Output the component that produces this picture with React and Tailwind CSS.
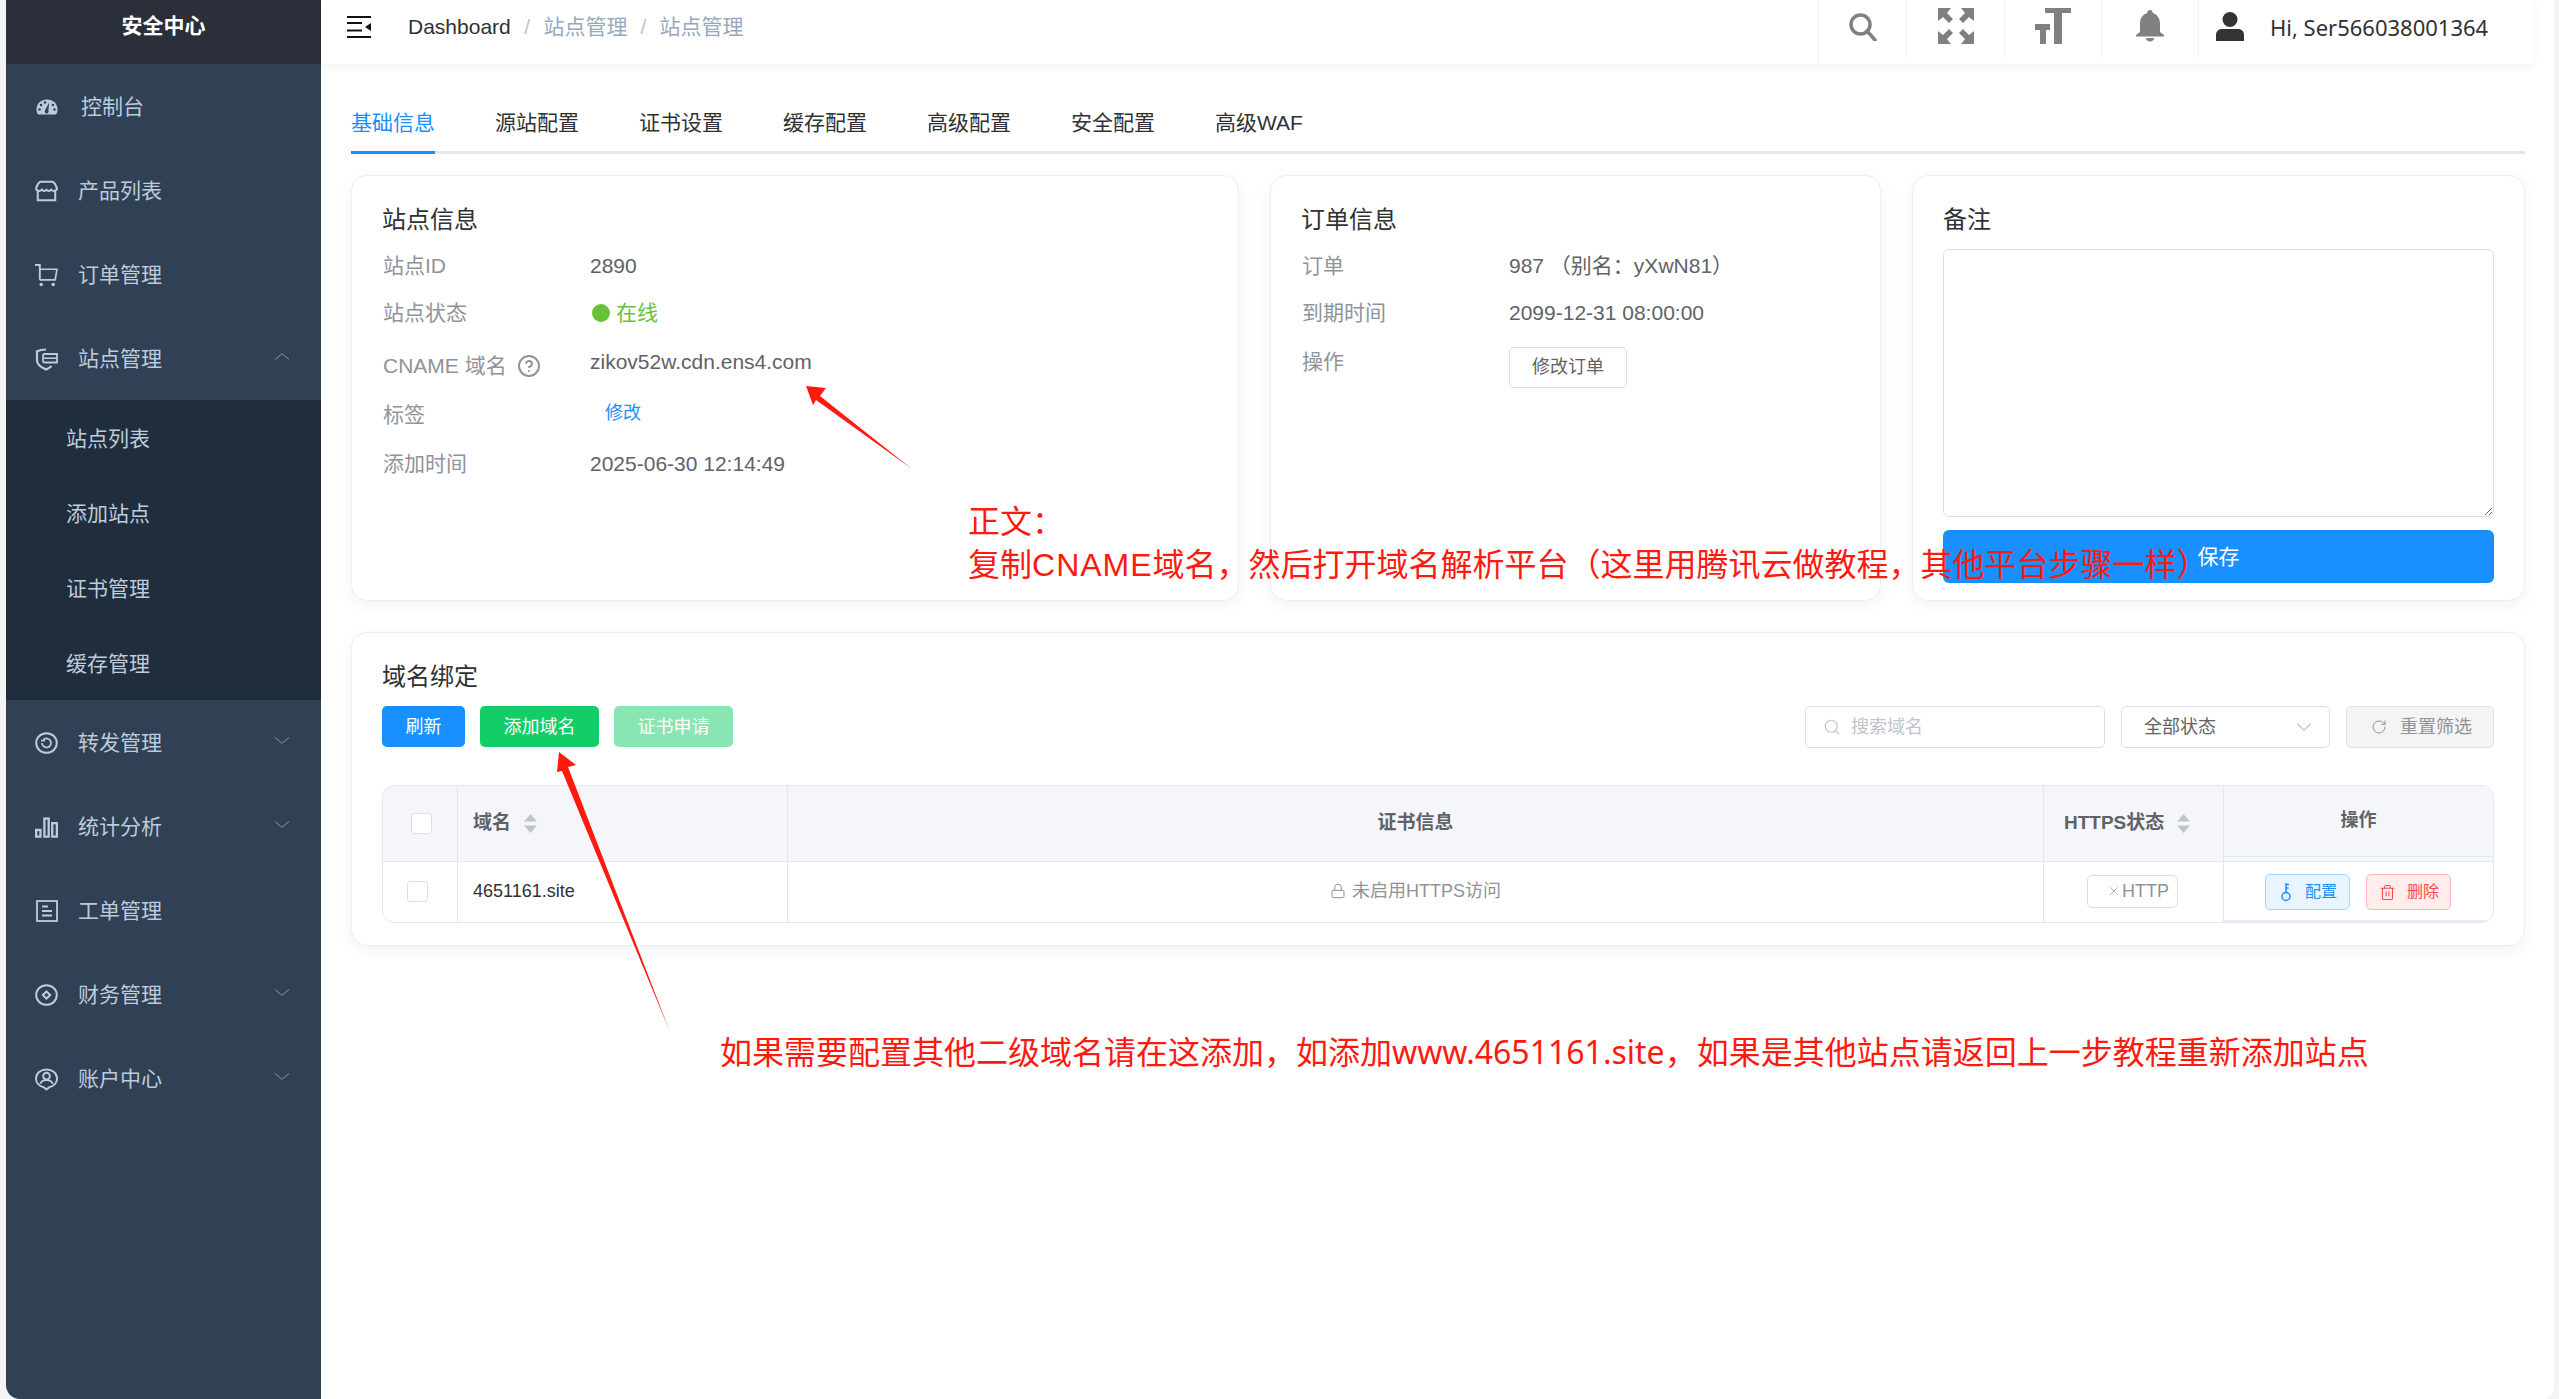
import { CircleHelp, Lock, RotateCw, Search, ChevronDown, X, Trash2 } from 'lucide-react';

const tabs = ['基础信息', '源站配置', '证书设置', '缓存配置', '高级配置', '安全配置', '高级WAF'];

const GaugeIcon = () => (
  <svg width="22" height="16" viewBox="0 0 22 16">
    <path fill="#bfcbd9" d="M11 .5C4.8.5.5 4.8.5 10.5c0 2 .5 3.8 1.6 4.9h17.8c1.1-1.1 1.6-2.9 1.6-4.9C21.500 4.800 17.200.500 11 .500z" />
    <circle cx="5" cy="6" r="1.300" fill="#304156" />
    <circle cx="3.500" cy="10.500" r="1.300" fill="#304156" />
    <circle cx="9" cy="3.500" r="1.300" fill="#304156" />
    <circle cx="17" cy="6" r="1.300" fill="#304156" />
    <circle cx="18.500" cy="10.500" r="1.300" fill="#304156" />
    <path fill="#304156" d="M13.200 3.500l-.8 8c.8 1.600-.4 3-1.700 3-1.500 0-2.500-1.500-1.800-3z" />
  </svg>
);

const StoreIcon = () => (
  <svg width="25" height="22" viewBox="0 0 25 22" fill="none" stroke="#bfcbd9" strokeWidth="2.200">
    <path d="M6 1h13c2.500 1 4 4 5 8-2 2.500-4.500 2.500-6.500.5-1.500 2-3.500 2-5 .3-1.500 1.700-3.500 1.700-5-.3C5.500 11.500 3 11.500 1 9c1-4 2.500-7 5-8z" />
    <path d="M3 11v10h19V11" />
  </svg>
);

const CartIcon = () => (
  <svg width="24" height="24" viewBox="0 0 24 24" fill="none" stroke="#bfcbd9" strokeWidth="2">
    <path d="M0 1.500h5V17" />
    <path d="M5 6h18l-2 11H5" strokeWidth="1.800" />
    <circle cx="6.500" cy="22" r="1.800" fill="#bfcbd9" stroke="none" />
    <circle cx="19" cy="22" r="1.800" fill="#bfcbd9" stroke="none" />
  </svg>
);

const ShieldIcon = () => (
  <svg width="23" height="23" viewBox="0 0 23 23" fill="none" stroke="#bfcbd9" strokeWidth="2.200">
    <path d="M11 1.500c-3.500 0-6.500.6-9 1.800v9.200c0 3.500 4.500 7 9 9 2-.9 4-2 5.500-3.500" />
    <path d="M22 6H9.500c-1 0-1.500.6-1.500 1.500v5.500c0 1 .5 1.500 1.500 1.500H22z" strokeWidth="1.800" />
    <path d="M9 10.200h13" strokeWidth="1.600" />
  </svg>
);

const ForwardIcon = () => (
  <svg width="23" height="22" viewBox="0 0 23 22" fill="none" stroke="#bfcbd9" strokeWidth="2">
    <ellipse cx="11.500" cy="11" rx="10.300" ry="9.800" />
    <path d="M7 11a4.500 4.500 0 1 0 1.500-3.400" strokeWidth="1.800" />
    <path d="M6 8.500h4" strokeWidth="1.800" />
  </svg>
);

const BarsIcon = () => (
  <svg width="24" height="21" viewBox="0 0 24 21" fill="none" stroke="#bfcbd9" strokeWidth="2.400">
    <rect x="1.200" y="13" width="4.500" height="7" />
    <rect x="9.800" y="1.200" width="4.500" height="18.800" />
    <rect x="18" y="6" width="4.800" height="14" />
  </svg>
);

const TicketIcon = () => (
  <svg width="22" height="22" viewBox="0 0 22 22" fill="none" stroke="#bfcbd9" strokeWidth="1.800">
    <rect x="1" y="1" width="20" height="20" />
    <path d="M6 6.500h6M6 11h10M6 15.500h10" />
  </svg>
);

const FinanceIcon = () => (
  <svg width="23" height="22" viewBox="0 0 23 22" fill="none" stroke="#bfcbd9" strokeWidth="2">
    <ellipse cx="11.500" cy="11" rx="10.300" ry="9.800" />
    <path d="M11.500 7.500l3.700 3.500-3.700 3.500L7.800 11z" />
  </svg>
);

const AccountIcon = () => (
  <svg width="24" height="24" viewBox="0 0 24 24" fill="none" stroke="#bfcbd9" strokeWidth="2">
    <path d="M12 23l-3-2.500C4.500 19.500 1 16 1 11.500 1 6 6 2 12 2s11 4 11 9.500c0 4.500-3.500 8-8 9z" />
    <circle cx="12" cy="9" r="3.500" />
    <path d="M5.500 17c1-3 3.500-3.800 6.500-3.800s5.500.8 6.500 3.800" />
  </svg>
);

const MenuCaret = ({ up }) => (
  <svg className="ml-auto mr-[32px] -mt-[6px]" width="14" height="7" viewBox="0 0 14 7" fill="none" stroke="#8a96a6" strokeWidth="1">
    <path d={up ? 'M0 6.500L7 .7l7 5.800' : 'M0 .5l7 5.800L14 .5'} />
  </svg>
);

const menu = [
  { label: '控制台', icon: GaugeIcon, nudge: true },
  { label: '产品列表', icon: StoreIcon },
  { label: '订单管理', icon: CartIcon },
  { label: '站点管理', icon: ShieldIcon, open: true, sub: ['站点列表', '添加站点', '证书管理', '缓存管理'] },
  { label: '转发管理', icon: ForwardIcon, caret: true },
  { label: '统计分析', icon: BarsIcon, caret: true },
  { label: '工单管理', icon: TicketIcon },
  { label: '财务管理', icon: FinanceIcon, caret: true },
  { label: '账户中心', icon: AccountIcon, caret: true },
];

function Sidebar() {
  return (
    <aside className="w-[315px] shrink-0 h-full bg-[#304156] rounded-bl-[14px] overflow-hidden text-[21px] text-[#bfcbd9]">
      <div className="h-[64px] bg-[#2b2f3a] flex items-center justify-center text-white font-bold pb-[13px]">安全中心</div>
      {menu.map((item) => {
        const Icon = item.icon;
        return (
          <div key={item.label}>
            <div className="h-[84px] pt-[2px] flex items-center">
              <span className="ml-[29px] w-[23px] mr-[20px] flex justify-center">
                <Icon />
              </span>
              <span className={item.nudge ? 'ml-[3px]' : ''}>{item.label}</span>
              {item.open && <MenuCaret up />}
              {item.caret && <MenuCaret />}
            </div>
            {item.sub && (
              <div className="bg-[#1f2d3d] h-[300px]">
                {item.sub.map((s) => (
                  <div key={s} className="h-[75px] pl-[60px] pt-[2px] flex items-center">{s}</div>
                ))}
              </div>
            )}
          </div>
        );
      })}
    </aside>
  );
}

function Navbar() {
  return (
    <header className="h-[64px] mr-[21px] bg-white shadow-[0_2px_8px_rgba(0,21,41,0.06)] flex relative z-10">
      <div className="flex items-center pl-[26px] pb-[10px] text-[21px]">
        <svg width="24" height="22" viewBox="0 0 24 22" fill="#111">
          <rect y="0" width="24" height="2" />
          <rect y="6" width="15" height="2" />
          <rect y="13.500" width="15" height="2" />
          <rect y="20" width="24" height="2" />
          <path d="M24 7v8l-6-4z" />
        </svg>
        <span className="ml-[37px] text-[#303133]">Dashboard</span>
        <span className="mx-[13.500px] text-[#c0c4cc]">/</span>
        <span className="text-[#97a8be]">站点管理</span>
        <span className="mx-[13px] text-[#c0c4cc]">/</span>
        <span className="text-[#97a8be]">站点管理</span>
      </div>
      <div className="ml-auto flex">
        <div className="w-[88px] border-l border-[#f0f0f0] flex justify-center pt-[13px] pl-[1px]">
          <svg width="28" height="28" viewBox="0 0 28 28" fill="none" stroke="#808080" strokeWidth="3.500">
            <circle cx="11.500" cy="11.500" r="9.500" />
            <path d="M18 18l8 9" strokeLinecap="round" />
          </svg>
        </div>
        <div className="w-[98px] h-[58px] border-l border-[#f0f0f0] flex justify-center pt-[8px]">
          <svg width="36" height="36" viewBox="0 0 36 36" fill="#808080">
            <path d="M0 0h13L9 5l6 6-4 4-6-6-5 4z" />
            <path d="M36 0H23l4 5-6 6 4 4 6-6 5 4z" />
            <path d="M0 36h13l-4-5 6-6-4-4-6 6-5-4z" />
            <path d="M36 36H23l4-5-6-6 4-4 6 6 5-4z" />
          </svg>
        </div>
        <div className="w-[97px] h-[58px] border-l border-[#f0f0f0] flex justify-center pt-[8px]">
          <svg width="36" height="36" viewBox="0 0 36 36" fill="#808080">
            <path d="M10 0h26v5h-9v31h-8V5h-9z" />
            <path d="M0 16h15v6h-4v14H5V22H0z" />
          </svg>
        </div>
        <div className="w-[97px] h-[58px] border-l border-[#f0f0f0] flex justify-center pt-[10px]">
          <svg width="30" height="32" viewBox="0 0 30 32" fill="#808080">
            <path d="M15 0c-1.700 0-2.800 1.200-2.800 3C7.500 4.500 5 8.500 5 13.500v8.500l-4 3v1.500h28V25l-4-3v-8.500c0-5-2.500-9-7.200-10.500 0-1.800-1.100-3-2.800-3z" />
            <path d="M11 28h8c0 2-1.800 3.500-4 3.500S11 30 11 28z" />
          </svg>
        </div>
        <div className="w-[335px] h-[58px] border-l border-[#f0f0f0] flex items-start pl-[17px]">
          <svg className="mt-[12px]" width="28" height="29" viewBox="0 0 28 29" fill="#333">
            <ellipse cx="14" cy="7.500" rx="7.500" ry="7.500" />
            <path d="M0 29v-6c0-3.500 2.500-6 6-6h16c3.500 0 6 2.500 6 6v6z" />
          </svg>
          <span className="ml-[26px] mt-[12px] text-[22px] text-[#303133] font-['Noto_Sans','Noto_Sans_CJK_SC',sans-serif] leading-[30px]">Hi, Ser566038001364</span>
        </div>
      </div>
    </header>
  );
}

function Tabs() {
  return (
    <div className="h-[90px] flex gap-[60px] border-b-[3px] border-[#e4e7ed]">
      {tabs.map((t, i) => (
        <div
          key={t}
          className={`mt-[31px] h-[59px] -mb-[3px] flex items-center border-b-[3px] text-[21px] ${
            i === 0 ? 'border-[#1890ff] text-[#1890ff]' : 'border-transparent text-[#303133]'
          }`}
        >
          {t}
        </div>
      ))}
    </div>
  );
}

function Card({ className, children }) {
  return (
    <section className={`bg-white border border-[#ebeef5] rounded-[16px] shadow-[0_4px_16px_rgba(0,0,0,0.05)] pl-[30px] ${className}`}>
      {children}
    </section>
  );
}

function CardTitle({ children }) {
  return <h3 className="h-[30px] flex items-center text-[24px] text-[#303133] font-['Noto_Sans_CJK_SC',sans-serif]">{children}</h3>;
}

function InfoRow({ label, h, lift, children }) {
  return (
    <div className={`flex items-center ml-[1px] text-[21px] ${h}`}>
      <div className={`w-[207px] shrink-0 text-[#909399] flex items-center ${lift || ''}`}>{label}</div>
      <div className="text-[#606266]">{children}</div>
    </div>
  );
}

function SiteCard() {
  return (
    <Card className="w-[888px] h-full pt-[27px]">
      <CardTitle>站点信息</CardTitle>
      <div className="mt-[9px]">
        <InfoRow label="站点ID" h="h-[47px]">2890</InfoRow>
        <InfoRow label="站点状态" h="h-[47px]">
          <span className="flex items-center text-[#67c23a]">
            <span className="ml-[2px] mr-[6px] w-[18px] h-[18px] rounded-full bg-[#67c23a]" />
            在线
          </span>
        </InfoRow>
        <InfoRow
          h="h-[51px]"
          lift="pt-[8px]"
          label={
            <>
              CNAME 域名
              <CircleHelp className="ml-[10px]" size={24} strokeWidth={2} />
            </>
          }
        >
          zikov52w.cdn.ens4.com
        </InfoRow>
        <InfoRow label="标签" h="h-[50px]" lift="pt-[6px]">
          <span className="ml-[15px] text-[18px] text-[#1890ff]">修改</span>
        </InfoRow>
        <InfoRow label="添加时间" h="h-[53px]">2025-06-30 12:14:49</InfoRow>
      </div>
    </Card>
  );
}

function OrderCard() {
  return (
    <Card className="w-[611px] h-full pt-[27px]">
      <CardTitle>订单信息</CardTitle>
      <div className="mt-[9px]">
        <InfoRow label="订单" h="h-[47px]">987 （别名：yXwN81）</InfoRow>
        <InfoRow label="到期时间" h="h-[47px]">2099-12-31 08:00:00</InfoRow>
        <div className="flex items-start ml-[1px] text-[21px]">
          <div className="w-[207px] h-[51px] flex items-center text-[#909399]">操作</div>
          <button className="mt-[11px] w-[118px] h-[41px] border border-[#dcdfe6] rounded-[5px] bg-white text-[18px] text-[#606266]">修改订单</button>
        </div>
      </div>
    </Card>
  );
}

function NoteCard() {
  return (
    <Card className="w-[613px] h-full pt-[27px] pr-[30px]">
      <CardTitle>备注</CardTitle>
      <textarea className="mt-[16px] block w-full h-[268px] border border-[#dcdfe6] rounded-[6px] bg-white outline-none" />
      <button className="mt-[13px] w-full h-[53px] rounded-[6px] bg-[#1890ff] text-white text-[21px]">保存</button>
    </Card>
  );
}

function SortCaret() {
  return (
    <svg className="ml-[13px] shrink-0" width="13" height="19" viewBox="0 0 13 19" fill="#c0c4cc">
      <path d="M6.500 0L13 7.500H0zM0 11.500h13L6.500 19z" />
    </svg>
  );
}

function Check({ className }) {
  return <span className={`block w-[21px] h-[21px] border border-[#dcdfe6] rounded-[3px] bg-white ${className || ''}`} />;
}

function DomainTable() {
  const head = 'border-r border-[#e2e6ee] flex items-center font-bold text-[19px] text-[#606266]';
  const cell = 'border-r border-[#e2e6ee] flex items-center pb-[2px]';
  return (
    <div className="mt-[37px] border border-[#e4e7ed] rounded-[12px] overflow-hidden grid grid-cols-[75px_330px_1256px_180px_1fr] grid-rows-[76px_60px]">
      <div className={`${head} bg-[#f5f6fa] justify-center border-b pl-[2px] pb-[1px]`}><Check /></div>
      <div className={`${head} bg-[#f5f6fa] border-b pl-[15px]`}>域名<SortCaret /></div>
      <div className={`${head} bg-[#f5f6fa] border-b justify-center text-[18px]`}>证书信息</div>
      <div className={`${head} bg-[#f5f6fa] border-b pl-[20px] text-[19.500px]`}>HTTPS状态<SortCaret /></div>
      <div className="bg-[#f5f6fa] border-b border-[#e2e6ee]">
        <div className="h-[71px] border-b border-[#e2e6ee] flex items-center justify-center pb-[2px] font-bold text-[18px] text-[#606266]">操作</div>
      </div>
      <div className={`${cell} pl-[24px]`}><Check /></div>
      <div className={`${cell} pl-[15px] text-[18px] text-[#303133]`}>4651161.site</div>
      <div className={`${cell} justify-center text-[18px] text-[#909399]`}>
        <Lock className="mr-[6px]" size={16} strokeWidth={1.500} />
        未启用HTTPS访问
      </div>
      <div className={`${cell} pl-[43px]`}>
        <span className="w-[91px] h-[33px] border border-[#dcdfe6] rounded-[5px] flex items-center justify-end pr-[8px] text-[18px] text-[#909399]">
          <X className="mr-[1px]" size={14} strokeWidth={1.200} />
          HTTP
        </span>
      </div>
      <div className="flex items-center pl-[41px] pt-[2px] gap-[16px] border-b-[2px] border-[#e6eaf5]">
        <button className="w-[85px] h-[36px] border border-[#a3d3ff] rounded-[5px] bg-[#e8f4ff] text-[#1890ff] text-[16px] flex items-center pl-[13px]">
          <svg width="14" height="20" viewBox="0 0 14 20" fill="none" stroke="currentColor" strokeWidth="1.500">
            <circle cx="7" cy="14.500" r="4" />
            <path d="M7 10.500V1M7 2.500h3M7 6h2.500" />
          </svg>
          <span className="ml-[12px]">配置</span>
        </button>
        <button className="w-[85px] h-[36px] border border-[#ffb6b6] rounded-[5px] bg-[#ffeded] text-[#ff4949] text-[16px] flex items-center pl-[12px]">
          <Trash2 size={17} strokeWidth={1.500} />
          <span className="ml-[11px]">删除</span>
        </button>
      </div>
    </div>
  );
}

function DomainCard() {
  return (
    <Card className="mt-[31px] h-[314px] pr-[30px] pt-[27px]">
      <CardTitle>域名绑定</CardTitle>
      <div className="mt-[16px] flex text-[18px] h-[42px]">
        <button className="w-[83px] h-[41px] pt-[2px] rounded-[5px] bg-[#1890ff] text-white">刷新</button>
        <button className="ml-[15px] w-[119px] h-[41px] pt-[2px] rounded-[5px] bg-[#13ce66] text-white">添加域名</button>
        <button className="ml-[15px] w-[119px] h-[41px] pt-[2px] rounded-[5px] bg-[#89e6b2] text-white">证书申请</button>
        <div className="ml-auto w-[300px] border border-[#dcdfe6] rounded-[5px] flex items-center pl-[17px] text-[#c0c4cc]">
          <Search size={18} strokeWidth={1.500} />
          <span className="ml-[10px]">搜索域名</span>
        </div>
        <div className="ml-[16px] w-[209px] border border-[#dcdfe6] rounded-[5px] flex items-center pl-[22px] pr-[12px] text-[#606266]">
          全部状态
          <ChevronDown className="ml-auto text-[#c0c4cc]" size={26} strokeWidth={1} />
        </div>
        <div className="ml-[16px] w-[148px] border border-[#dcdfe6] rounded-[5px] bg-[#f4f4f5] flex items-center pl-[24px] text-[#909399]">
          <RotateCw size={16} strokeWidth={1.500} />
          <span className="ml-[13px]">重置筛选</span>
        </div>
      </div>
      <DomainTable />
    </Card>
  );
}

function Annotations() {
  return (
    <>
      <svg className="absolute left-0 top-0 pointer-events-none" width="2559" height="1399" fill="#ff1a0f">
        <path d="M806 386L826 388 820 396 912 469 816 400 813 405z" />
        <path d="M559 752L576 765 568 767 670 1032 562 771 557 772z" />
      </svg>
      <div className="absolute left-[968px] top-[499px] text-[32px] leading-[43px] text-[#ff1a0f] whitespace-nowrap font-['Noto_Sans','Noto_Sans_CJK_SC',sans-serif]">
        <div>正文：</div>
        <div>复制<span className="tracking-[1px] font-['Liberation_Sans',sans-serif]">CNAME</span>域名，然后打开域名解析平台（这里用腾讯云做教程，其他平台步骤一样）</div>
      </div>
      <div className="absolute left-[720px] top-[1030px] text-[32px] leading-[43px] text-[#ff1a0f] whitespace-nowrap font-['Noto_Sans','Noto_Sans_CJK_SC',sans-serif]">
        如果需要配置其他二级域名请在这添加，如添加www.4651161.site，如果是其他站点请返回上一步教程重新添加站点
      </div>
    </>
  );
}

export default function App() {
  return (
    <div className="relative h-[1399px] w-full overflow-hidden bg-[#f4f4f4] pl-[6px] pr-[5px] flex font-['Liberation_Sans','Noto_Sans_CJK_SC',sans-serif]">
      <Sidebar />
      <main className="flex-1 min-w-0 bg-white rounded-br-[12px]">
        <Navbar />
        <div className="pl-[30px] pr-[29px]">
          <Tabs />
          <div className="mt-[21px] h-[426px] flex gap-[31px]">
            <SiteCard />
            <OrderCard />
            <NoteCard />
          </div>
          <DomainCard />
        </div>
      </main>
      <Annotations />
    </div>
  );
}
